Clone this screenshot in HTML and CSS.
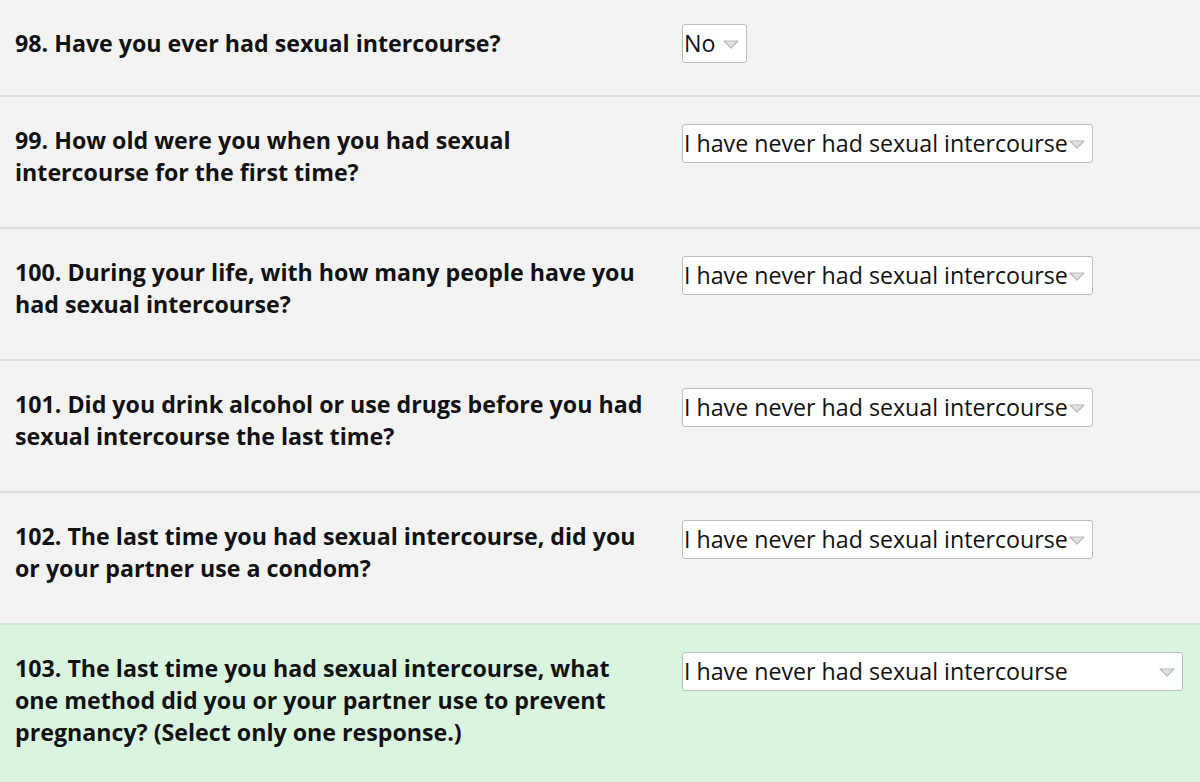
FILE: index.html
```html
<!DOCTYPE html>
<html>
<head>
<meta charset="utf-8">
<link rel="stylesheet" href="styles.css">
</head>
<body>
<div class="survey">
  <div class="row first">
    <div class="q">98. Have you ever had sexual intercourse?</div>
    <div class="a"><div class="select short"><span class="val">No</span><svg class="arrow" width="16" height="9" viewBox="0 0 16 9"><polygon points="1,1 15,1 8,8" fill="#e2e2e2" stroke="#b9b9b9" stroke-width="1.2" stroke-linejoin="round"/></svg></div></div>
  </div>
  <div class="row">
    <div class="q">99. How old were you when you had sexual intercourse for the first time?</div>
    <div class="a"><div class="select"><span class="val">I have never had sexual intercourse</span><svg class="arrow" width="16" height="9" viewBox="0 0 16 9"><polygon points="1,1 15,1 8,8" fill="#e2e2e2" stroke="#b9b9b9" stroke-width="1.2" stroke-linejoin="round"/></svg></div></div>
  </div>
  <div class="row">
    <div class="q">100. During your life, with how many people have you had sexual intercourse?</div>
    <div class="a"><div class="select"><span class="val">I have never had sexual intercourse</span><svg class="arrow" width="16" height="9" viewBox="0 0 16 9"><polygon points="1,1 15,1 8,8" fill="#e2e2e2" stroke="#b9b9b9" stroke-width="1.2" stroke-linejoin="round"/></svg></div></div>
  </div>
  <div class="row">
    <div class="q">101. Did you drink alcohol or use drugs before you had sexual intercourse the last time?</div>
    <div class="a"><div class="select"><span class="val">I have never had sexual intercourse</span><svg class="arrow" width="16" height="9" viewBox="0 0 16 9"><polygon points="1,1 15,1 8,8" fill="#e2e2e2" stroke="#b9b9b9" stroke-width="1.2" stroke-linejoin="round"/></svg></div></div>
  </div>
  <div class="row">
    <div class="q">102. The last time you had sexual intercourse, did you or your partner use a condom?</div>
    <div class="a"><div class="select"><span class="val">I have never had sexual intercourse</span><svg class="arrow" width="16" height="9" viewBox="0 0 16 9"><polygon points="1,1 15,1 8,8" fill="#e2e2e2" stroke="#b9b9b9" stroke-width="1.2" stroke-linejoin="round"/></svg></div></div>
  </div>
  <div class="row active">
    <div class="q">103. The last time you had sexual intercourse, what one method did you or your partner use to prevent pregnancy? (Select only one response.)</div>
    <div class="a"><div class="select wide"><span class="val">I have never had sexual intercourse</span><svg class="arrow" width="16" height="9" viewBox="0 0 16 9"><polygon points="1,1 15,1 8,8" fill="#e2e2e2" stroke="#b9b9b9" stroke-width="1.2" stroke-linejoin="round"/></svg></div></div>
  </div>
</div>
</body>
</html>
```

FILE: styles.css
```css
html, body {
  margin: 0;
  padding: 0;
  background: #f3f3f3;
}
body {
  font-family: "Open Sans", "Liberation Sans", sans-serif;
  color: #111;
  overflow: hidden;
  height: 782px;
}
.survey {
  display: flex;
  flex-direction: column;
}
.row {
  display: grid;
  grid-template-columns: 632px auto;
  column-gap: 35px;
  align-items: start;
  padding: 27px 15px 39px 15px;
  border-top: 2px solid #dcdcdc;
  background: #f3f3f3;
}
.row.first {
  border-top: none;
  padding-top: 24px;
  padding-bottom: 32px;
}
.row.first .q {
  padding-top: 3px;
}
.row.active {
  background: #daf5df;
  border-top-color: #d5e5d8;
  min-height: 200px;
}
.q {
  font-weight: 700;
  font-size: 23.2px;
  line-height: 32px;
}
.a {
  display: flex;
}
.select {
  display: inline-flex;
  align-items: center;
  height: 39px;
  box-sizing: border-box;
  padding: 0 7px 0 1px;
  background: #fff;
  border: 1px solid #bdbdbd;
  border-radius: 3px;
  font-size: 23.2px;
  color: #111;
  white-space: nowrap;
}
.select .val {
  line-height: 37px;
}
.select .arrow {
  margin-left: 1px;
  margin-top: 1px;
}
.select.short .arrow {
  margin-left: 8px;
}
.select.wide {
  width: 501px;
  justify-content: space-between;
  padding-right: 7px;
}
```
